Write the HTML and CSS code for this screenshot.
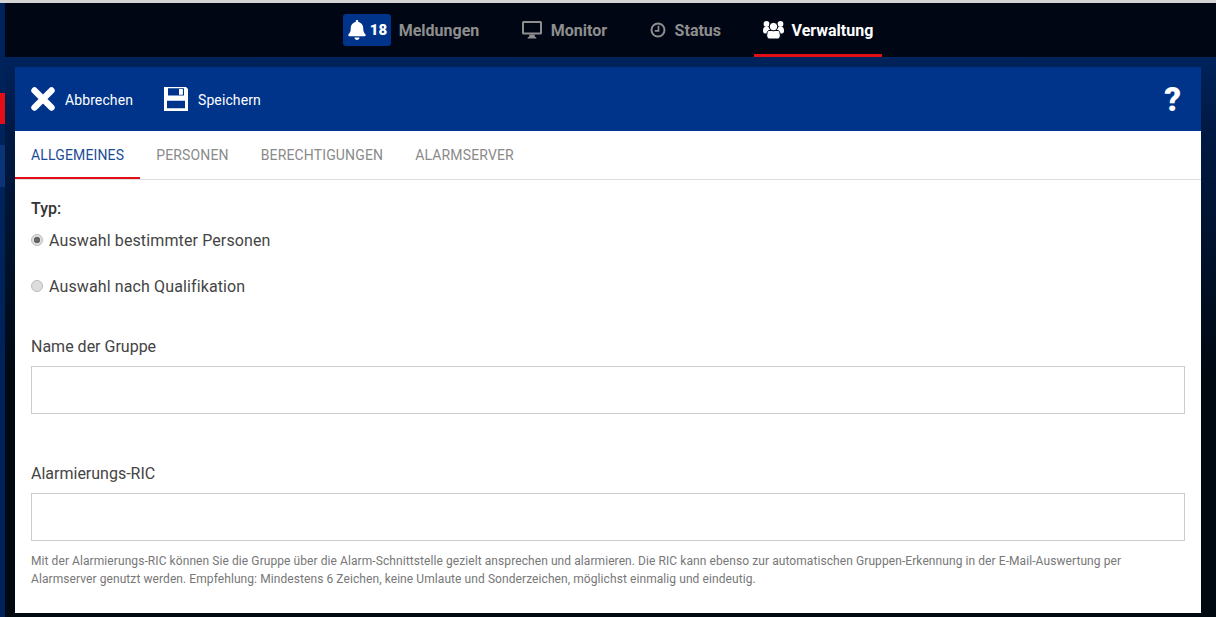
FILE: index.html
```html
<!DOCTYPE html>
<html lang="de">
<head>
    <meta charset="UTF-8">
    <title>Gruppe bearbeiten</title>
    <link rel="stylesheet" href="styles.css">
</head>
<body>
    <div id="rail">
        <span class="rail-mark"></span>
        <span class="rail-item"></span>
    </div>
    <div id="main">
        <nav id="navbar">
            <a class="nav-item">
                <span class="badge">
                    <svg class="icon-bell" viewBox="0 0 448 512"><path d="M224 512c35.32 0 63.97-28.65 63.97-64H160.03c0 35.35 28.65 64 63.97 64zm215.39-149.71c-19.32-20.76-55.47-51.99-55.47-154.29 0-77.7-54.48-139.9-127.94-155.16V32c0-17.67-14.32-32-31.98-32s-31.98 14.33-31.98 32v20.84C118.56 68.1 64.08 130.3 64.08 208c0 102.3-36.15 133.53-55.47 154.29-6 6.45-8.66 14.16-8.61 21.71.11 16.4 12.98 32 32.1 32h383.8c19.12 0 32-15.6 32.1-32 .05-7.55-2.61-15.27-8.61-21.71z"/></svg>
                    18
                </span>
                Meldungen
            </a>
            <a class="nav-item">
                <svg class="icon-monitor" viewBox="0 0 20 18"><path fill-rule="evenodd" d="M1.500 0h17A1.500 1.500 0 0 1 20 1.500v10.500a1.500 1.500 0 0 1-1.500 1.500H1.500A1.500 1.500 0 0 1 0 12V1.500A1.500 1.500 0 0 1 1.500 0zM2 2v9.500h16V2z"/><path d="M7.500 13.500h5l.5 2.500h1.200V17.500H5.800V16H7z"/></svg>
                Monitor
            </a>
            <a class="nav-item">
                <svg class="icon-clock" viewBox="0 0 16 16"><circle cx="8" cy="8" r="6.500" fill="none" stroke="currentColor" stroke-width="2"/><path d="M8.500 3.800v5H4.800" fill="none" stroke="currentColor" stroke-width="1.700"/></svg>
                Status
            </a>
            <a class="nav-item active">
                <svg class="icon-users" viewBox="0 0 21 18"><circle cx="3.500" cy="3" r="2.900"/><circle cx="17.500" cy="3" r="2.900"/><path d="M0 10c0-2.500.8-4 2-4h3c1.200 0 2 1.500 2 4 0 1.500-1 2.500-2.500 2.500H2C.8 12.500 0 11.500 0 10zM14 10c0-2.500.8-4 2-4h3c1.200 0 2 1.500 2 4 0 1.500-.8 2.500-2 2.500h-2.500C15 12.500 14 11.500 14 10z"/><path d="M5.500 9.500h10c1.200 1 1.800 3 1.800 5.300 0 2-1.300 3.200-3 3.200H6.700c-1.700 0-3-1.200-3-3.200 0-2.300.6-4.300 1.800-5.300z" stroke="#000614" stroke-width="1"/><circle cx="10.500" cy="5.600" r="4.200" stroke="#000614" stroke-width="1"/></svg>
                Verwaltung
            </a>
        </nav>
        <div id="stage">
            <div id="card">
                <div id="toolbar">
                    <a class="tool">
                        <svg class="icon-tool" viewBox="0 0 24 24"><path d="M3.500 3.500l17 17M20.500 3.500l-17 17" fill="none" stroke="#fff" stroke-width="6.400" stroke-linecap="round"/></svg>
                        <span class="tool-text">Abbrechen</span>
                    </a>
                    <a class="tool">
                        <svg class="icon-tool" viewBox="0 0 24 24"><path fill="#fff" fill-rule="evenodd" d="M0 0h22l2 2v22H0zM4 1.300v7.300h16V1.300zM15 2h3.700v5.500H15zM3 13.700v7.600h18v-7.600z"/><path fill="#fff" d="M15 2h3.700v5.500H15z"/></svg>
                        <span class="tool-text">Speichern</span>
                    </a>
                    <span class="help">?</span>
                </div>
                <div id="tabs">
                    <a class="tab selected">Allgemeines</a>
                    <a class="tab">Personen</a>
                    <a class="tab">Berechtigungen</a>
                    <a class="tab">Alarmserver</a>
                </div>
                <form id="form">
                    <div class="type-label">Typ:</div>
                    <label class="radio-row">
                        <input type="radio" name="typ" checked>
                        Auswahl bestimmter Personen
                    </label>
                    <label class="radio-row">
                        <input type="radio" name="typ">
                        Auswahl nach Qualifikation
                    </label>
                    <label class="field-label first">Name der Gruppe</label>
                    <input class="text-input" type="text">
                    <label class="field-label">Alarmierungs-RIC</label>
                    <input class="text-input" type="text">
                    <p class="hint">Mit der Alarmierungs-RIC können Sie die Gruppe über die Alarm-Schnittstelle gezielt ansprechen und alarmieren. Die RIC kann ebenso zur automatischen Gruppen-Erkennung in der E-Mail-Auswertung per Alarmserver genutzt werden. Empfehlung: Mindestens 6 Zeichen, keine Umlaute und Sonderzeichen, möglichst einmalig und eindeutig.</p>
                </form>
            </div>
        </div>
    </div>
</body>
</html>
```

FILE: styles.css
```css
* {
    margin: 0;
    padding: 0;
    box-sizing: border-box;
}
html, body {
    height: 100%;
    overflow: hidden;
}
body {
    display: flex;
    font-family: Roboto, "Liberation Sans", sans-serif;
    background-color: #00173d;
    border-top: 3px solid #d4d4d4;
}

/* left edge of the page behind the dialog */
#rail {
    width: 5px;
    flex-shrink: 0;
    background-color: #00225a;
    padding-top: 90px;
}
.rail-mark {
    display: block;
    height: 31px;
    background-color: #e30f16;
}
.rail-item {
    display: block;
    height: 42px;
    margin-top: 21px;
    background-color: #0b3478;
}

#main {
    flex: 1;
    display: flex;
    flex-direction: column;
    min-width: 0;
}

/* top navigation */
#navbar {
    height: 54px;
    display: flex;
    justify-content: center;
    gap: 22.5px;
    background-color: #000614;
    padding-right: 6px;
}
.nav-item {
    display: flex;
    align-items: center;
    gap: 9px;
    padding: 0 10px;
    font-size: 16px;
    font-weight: 700;
    color: #8e8e8e;
    fill: #8e8e8e;
}
.nav-item:first-child {
    gap: 8px;
}
.nav-item.active {
    gap: 8px;
    padding: 0 9px;
    color: #fff;
    fill: #fff;
    box-shadow: inset 0 -3px 0 #e30f16;
}
.badge {
    display: flex;
    align-items: center;
    gap: 4px;
    width: 48px;
    height: 32px;
    padding-left: 5px;
    border-radius: 3px;
    background-color: #00348b;
    color: #fff;
    fill: #fff;
    font-size: 15px;
    font-weight: 900;
}
.icon-bell {
    width: 18px;
    height: 20px;
}
.icon-monitor {
    width: 20px;
    height: 18px;
}
.icon-clock {
    width: 16px;
    height: 16px;
}
.icon-users {
    width: 21px;
    height: 18px;
}

/* dialog */
#stage {
    flex: 1;
    min-height: 0;
    padding: 10px 15px 4px 10px;
    background: linear-gradient(to bottom, #00235c, #001a45 12%, #000810 58%);
}
#card {
    height: 100%;
    background-color: #fff;
    overflow: hidden;
}
#toolbar {
    height: 64px;
    display: flex;
    align-items: center;
    gap: 31px;
    padding: 0 20px 0 16px;
    background-color: #00348b;
}
.tool {
    display: flex;
    align-items: center;
    gap: 10px;
    font-size: 14px;
    letter-spacing: 0.1px;
    color: #fff;
}
.tool-text {
    margin-top: 2px;
}
.icon-tool {
    width: 24px;
    height: 24px;
}
.help {
    margin-left: auto;
    font-size: 33px;
    font-weight: 900;
    color: #fff;
}

#tabs {
    height: 49px;
    display: flex;
    border-bottom: 1px solid #ddd;
}
.tab {
    padding: 0 16px;
    height: 48px;
    line-height: 48px;
    font-size: 14px;
    letter-spacing: 0.15px;
    text-transform: uppercase;
    color: #8a8a8a;
}
.tab.selected {
    color: #1d4c96;
    border-bottom: 2px solid #e30f16;
}

#form {
    padding: 19px 16px 0;
    color: #444;
}
.type-label {
    font-size: 16px;
    font-weight: 500;
    line-height: 20px;
    color: #333;
}
.radio-row {
    display: flex;
    align-items: center;
    gap: 6px;
    height: 22px;
    margin-top: 10px;
    font-size: 16px;
    letter-spacing: 0.12px;
}
.radio-row + .radio-row {
    margin-top: 24px;
}
.radio-row input {
    appearance: none;
    width: 12px;
    height: 12px;
    border: 1px solid #bbb;
    border-radius: 50%;
    background-color: #ddd;
}
.radio-row input:checked {
    background: radial-gradient(circle, #666 3px, #ddd 3.5px);
}
.field-label {
    display: block;
    margin: 50px 0 9px;
    font-size: 16px;
    line-height: 20px;
}
.field-label.first {
    margin-top: 40px;
}
.text-input {
    display: block;
    width: 100%;
    height: 48px;
    border: 1px solid #ccc;
    background-color: #fff;
}
.hint {
    margin-top: 11px;
    font-size: 12px;
    line-height: 18px;
    letter-spacing: 0.08px;
    color: #777;
}
```
